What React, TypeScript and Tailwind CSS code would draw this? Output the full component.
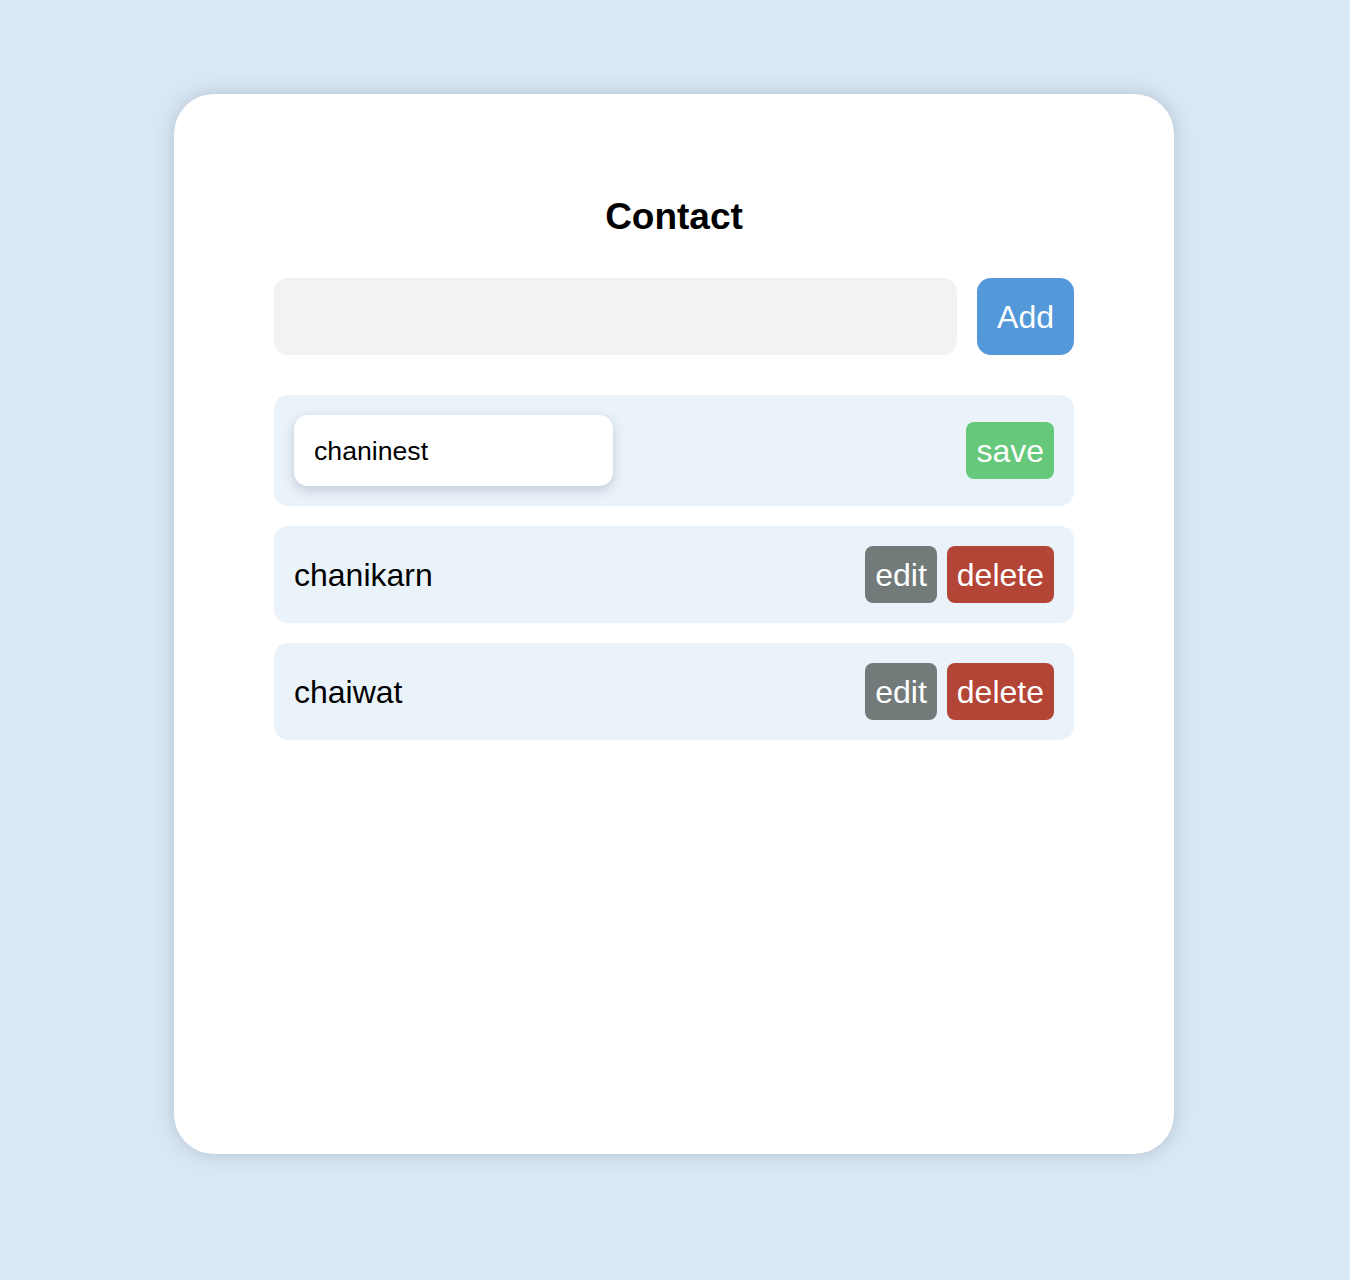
import { useState } from 'react'

type Contact = { id: number; name: string }

export default function App() {
  const [contacts] = useState<Contact[]>([
    { id: 1, name: 'chaninest' },
    { id: 2, name: 'chanikarn' },
    { id: 3, name: 'chaiwat' },
  ])
  const [editingId] = useState<number | null>(1)
  const [draft, setDraft] = useState('chaninest')
  const [newName, setNewName] = useState('')

  return (
    <div className="min-h-[1280px] bg-[#dae8f5] pt-[94px] font-['Liberation_Sans',Arial,sans-serif]">
      <div className="ml-[174px] h-[1060px] w-[1000px] rounded-[40px] bg-white px-[100px] pt-[100px] shadow-[0_0_18px_rgba(60,80,100,0.25)]">
        <h1 className="mb-[38px] text-center text-[37px] leading-[46px] font-bold text-black">Contact</h1>

        <div className="mb-10 flex gap-5">
          <input
            value={newName}
            onChange={(e) => setNewName(e.target.value)}
            className="h-[77px] flex-1 rounded-[14px] bg-[#f1f2f4] px-5 text-[32px] outline-none"
          />
          <button
            type="button"
            className="h-[77px] rounded-[14px] bg-[#5398d8] px-5 text-[32px] text-white"
          >
            Add
          </button>
        </div>

        <ul className="flex flex-col gap-5">
          {contacts.map((c) => (
            <li key={c.id} className="flex items-center justify-between rounded-[14px] bg-[#ebf3fa] p-5">
              {editingId === c.id ? (
                <>
                  <input
                    value={draft}
                    onChange={(e) => setDraft(e.target.value)}
                    className="h-[71px] w-[319px] rounded-[14px] bg-white px-5 pt-[2px] text-[26.67px] text-black shadow-[0_4px_12px_rgba(60,80,100,0.25)] outline-none"
                  />
                  <button
                    type="button"
                    className="h-[57px] rounded-[8px] bg-[#65c87a] px-[10px] text-[32px] text-white"
                  >
                    save
                  </button>
                </>
              ) : (
                <>
                  <span className="h-[57px] pt-[2px] text-[32px] leading-[55px] text-black">{c.name}</span>
                  <div className="flex gap-[10px]">
                    <button
                      type="button"
                      className="h-[57px] rounded-[8px] bg-[#727a7a] px-[10px] text-[32px] text-white"
                    >
                      edit
                    </button>
                    <button
                      type="button"
                      className="h-[57px] rounded-[8px] bg-[#b34537] px-[10px] text-[32px] text-white"
                    >
                      delete
                    </button>
                  </div>
                </>
              )}
            </li>
          ))}
        </ul>
      </div>
    </div>
  )
}
